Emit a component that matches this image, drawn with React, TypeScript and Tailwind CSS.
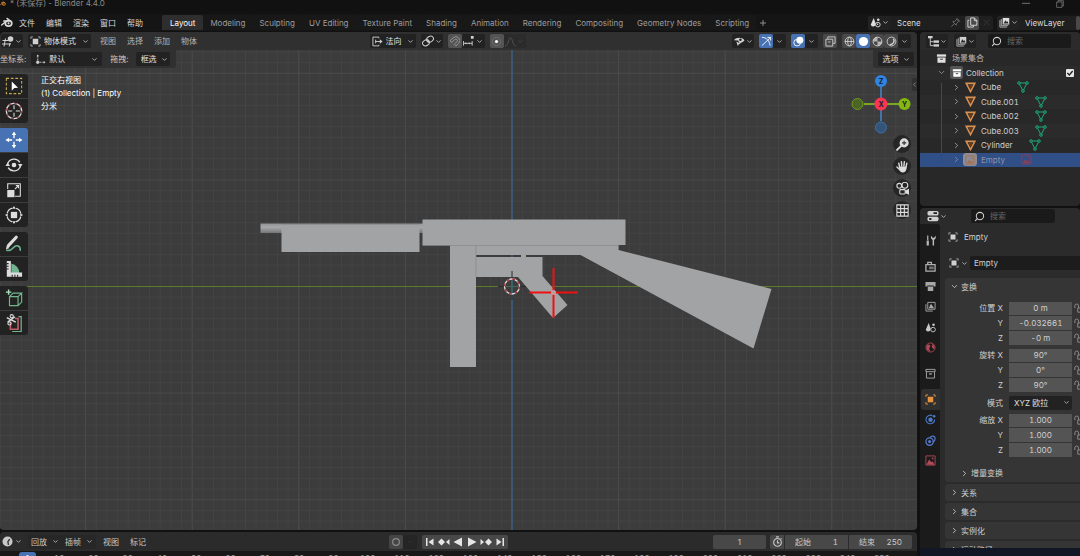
import React from 'react';
import { ChevronDown, ChevronRight, ChevronLeft, Search } from 'lucide-react';

type IconProps = { children: React.ReactNode; className?: string };

const Icon = ({ children, className = 'size-[11px]' }: IconProps) => (
  <svg viewBox="0 0 12 12" fill="none" stroke="currentColor" strokeWidth="1" className={`shrink-0 ${className}`} aria-hidden="true">
    {children}
  </svg>
);

const Down = () => <ChevronDown size={7} strokeWidth={3} className="shrink-0 text-[#b8b8b8]" />;

/* ---------- icons ---------- */

const ObjectIcon = ({ className }: { className?: string }) => (
  <Icon className={className}>
    <path d="M1 3.2V1h2.2M8.8 1H11v2.2M11 8.8V11H8.8M3.2 11H1V8.8" opacity=".8" />
    <rect x="3" y="3" width="6" height="6" fill="currentColor" stroke="none" />
  </Icon>
);

const SceneIcon = ({ className }: { className?: string }) => (
  <Icon className={className}>
    <path d="M4 1.2 6 6.5a2.6 2.6 0 1 1-5.2 2Z" fill="currentColor" stroke="none" />
    <circle cx="9" cy="3" r="1.4" fill="currentColor" stroke="none" />
    <circle cx="8.6" cy="8.3" r="2.5" />
    <circle cx="8.3" cy="8" r=".8" fill="currentColor" stroke="none" />
  </Icon>
);

const LayerIcon = ({ className }: { className?: string }) => (
  <Icon className={className}>
    <path d="M1 3.5V11h7.5M2.5 2.2v7.3h7.5" opacity=".8" />
    <rect x="4" y="1" width="7.2" height="7.2" fill="currentColor" stroke="none" />
    <path d="m5 7 2-3.5 1.4 2L9.4 4.6l1 2.4Z" fill="#282828" stroke="none" />
  </Icon>
);

const BoxIcon = ({ className }: { className?: string }) => (
  <Icon className={className}>
    <rect x="1" y="1.5" width="10" height="2.5" fill="currentColor" stroke="none" />
    <path d="M1.6 5v5.5h8.8V5Z" fill="currentColor" stroke="none" />
    <path d="M4.5 6.8h3" stroke="#2b2b2b" />
  </Icon>
);

const PropertiesIcon = () => (
  <Icon className="size-[12px]">
    <rect x=".5" y="1" width="11" height="4.5" rx="1.6" fill="currentColor" stroke="none" />
    <rect x=".5" y="6.7" width="11" height="4.5" rx="1.6" fill="currentColor" stroke="none" />
    <path d="M6.5 3.2h3.5M2.2 9h2.2" stroke="#222" strokeWidth="1.8" />
  </Icon>
);

const BlenderIcon = ({ className }: { className?: string }) => (
  <svg viewBox="0 0 14 12" className={`shrink-0 ${className}`} fill="none" stroke="currentColor" strokeWidth="1.6" aria-hidden="true">
    <ellipse cx="8.8" cy="7" rx="3.8" ry="3.2" strokeWidth="2" />
    <circle cx="8.8" cy="7" r="1.2" fill="currentColor" stroke="none" />
    <path d="m7 1.2 4.4 3.5M3.2 4.2h5.4M.8 9 5 5.5" strokeLinecap="round" />
  </svg>
);

/* ---------- shared controls ---------- */

type IconButtonProps = { label: string; children: React.ReactNode; className?: string };

const IconButton = ({ label, children, className = '' }: IconButtonProps) => (
  <button aria-label={label} className={`flex h-[14px] items-center justify-center rounded-[2px] ${className}`}>
    {children}
  </button>
);

const IconMenu = ({ label, children }: { label: string; children: React.ReactNode }) => (
  <IconButton label={label} className="w-[22px] gap-px bg-[#222222]">
    {children}
    <Down />
  </IconButton>
);

type PickerProps = { label: string; value: string; className?: string; icon?: React.ReactNode };

const Picker = ({ label, value, className = '', icon }: PickerProps) => (
  <label className={`flex h-[14px] items-center gap-[3px] rounded-[2px] bg-[#222222] ${className}`}>
    {icon}
    <select aria-label={label} className="min-w-0 flex-1 appearance-none bg-transparent text-[#e0e0e0] outline-none">
      <option>{value}</option>
    </select>
    <Down />
  </label>
);

const SearchBox = ({ id, className = '' }: { id: string; className?: string }) => (
  <label htmlFor={id} className={`flex h-[14px] items-center gap-[5px] rounded-[2px] bg-[#1a1a1a] pl-[3px] ${className}`}>
    <Search size={11} strokeWidth={2.2} className="shrink-0 -scale-x-100 text-[#d0d0d0]" />
    <input id={id} type="search" placeholder="搜索" aria-label="搜索" className="w-full min-w-0 bg-transparent outline-none placeholder:text-[#666666]" />
  </label>
);

/* ---------- top bar ---------- */

const menus = ['文件', '编辑', '渲染', '窗口', '帮助'];
const workspaces = ['Layout', 'Modeling', 'Sculpting', 'UV Editing', 'Texture Paint', 'Shading', 'Animation', 'Rendering', 'Compositing', 'Geometry Nodes', 'Scripting'];

const TitleBar = () => (
  <header className="flex h-[14px] shrink-0 items-start bg-[#111111] leading-[7px] text-[#8a8a8a]">
    <BlenderIcon className="mr-1 h-[7px] w-[6px] text-[#e08a2e]" />
    <span>* (未保存) - Blender 4.4.0</span>
    <div className="ml-auto flex gap-[26px] pr-4 text-[#707070]">
      <button aria-label="最小化"><Icon className="size-[8px]"><path d="M0 5h12" strokeWidth="1.5" /></Icon></button>
      <button aria-label="还原"><Icon className="size-[8px]"><path d="M1 3h8v8H1ZM3 3V1h8v8H9" strokeWidth="1.3" /></Icon></button>
    </div>
  </header>
);

const TopBar = () => (
  <nav className="flex h-[17px] shrink-0 items-center bg-[#151515]">
    <BlenderIcon className="mr-[6px] ml-px h-[11px] w-[12px] text-[#d8d8d8]" />
    <div className="mr-[19px] flex gap-[11px] text-[#d8d8d8]">
      {menus.map((menu) => <button key={menu}>{menu}</button>)}
    </div>
    <div className="flex items-center">
      {workspaces.map((name, i) => (
        <button key={name} className={`h-[15px] rounded-t-[2px] whitespace-nowrap ${i === 0 ? 'bg-[#2e2e2e] px-[8px] text-white' : 'bg-[#181818] px-[7px] text-[#9d9d9d]'}`}>
          {name}
        </button>
      ))}
      <IconButton label="添加工作区" className="w-[14px] text-[#9d9d9d]">
        <Icon className="size-[8px]"><path d="M6 1.5v9M1.5 6h9" strokeWidth="1.3" /></Icon>
      </IconButton>
    </div>
    <div className="ml-auto flex gap-1">
      <div className="flex w-[125px] items-center rounded-[2px] bg-[#1f1f1f] text-[#dddddd]">
        <IconMenu label="浏览场景"><SceneIcon /></IconMenu>
        <input aria-label="场景" defaultValue="Scene" className="ml-[7px] w-0 min-w-0 flex-1 bg-transparent outline-none" />
        <IconButton label="固定场景" className="mr-[3px] w-[14px] text-[#707070]">
          <Icon><path d="m1.5 10.5 3-3M6.8 2l3.2 3.2M7.3 2.5 4.8 5 3 5.2 6.8 9 7 7.2l2.5-2.5M7.2 1.2l3.6 3.6" /></Icon>
        </IconButton>
        <IconButton label="新建场景" className="w-[14px] bg-[#494949]">
          <Icon><path d="M2.5 3.5H1v7.5h6V9.5M4 1h4l2.8 2.8V9H4ZM8 1v3h3" /></Icon>
        </IconButton>
        <IconButton label="移除场景" className="w-[14px] text-[#3a3a3a]">
          <Icon className="size-[9px]"><path d="m2 2 8 8M10 2l-8 8" /></Icon>
        </IconButton>
      </div>
      <div className="flex w-[83px] items-center rounded-l-[2px] bg-[#1f1f1f] text-[#dddddd]">
        <IconMenu label="浏览视图层"><LayerIcon /></IconMenu>
        <input aria-label="视图层" defaultValue="ViewLayer" className="ml-[6px] w-0 min-w-0 flex-1 bg-transparent outline-none" />
        <IconButton label="新建视图层" className="w-[4px] bg-[#494949]">{null}</IconButton>
      </div>
    </div>
  </nav>
);

/* ---------- 3D viewport ---------- */

const ViewportHeader = () => (
  <div className="flex h-[18px] shrink-0 items-center rounded-t-[3px] bg-[#303030] pr-[6px] text-[#d0d0d0]">
    <div className="mr-[5px] ml-px">
      <IconMenu label="编辑器类型">
        <Icon className="size-[12px]">
          <path d="M.5 5.5h6M0 9h9M3.5 3.5 2 11.5M8 8l-.8 3.5" />
          <circle cx="8.5" cy="4" r="2.8" fill="currentColor" stroke="none" />
        </Icon>
      </IconMenu>
    </div>
    <Picker label="模式" value="物体模式" icon={<ObjectIcon className="size-[11px]" />} className="w-[63px] px-[2px]" />
    <div className="ml-[9px] flex gap-[11px]">
      {['视图', '选择', '添加', '物体'].map((menu) => <button key={menu} className="text-[#b5b5b5]">{menu}</button>)}
    </div>

    <div className="flex flex-1 items-center justify-center gap-[5px] pr-[34px]">
      <Picker
        label="变换坐标系"
        value="法向"
        className="w-[46px] px-[2px]"
        icon={<Icon><path d="M7.5 2.5V1.2H1v9.6h6.5V9.5M4 6h5.5M4 4v4" /><path d="m8.5 3.5 3 2.5-3 2.5Z" fill="currentColor" stroke="none" /></Icon>}
      />
      <IconMenu label="轴心点">
        <Icon className="size-[12px]"><ellipse cx="4" cy="7.8" rx="3.6" ry="2.8" transform="rotate(-30 4 7.8)" /><ellipse cx="8" cy="4.2" rx="3.6" ry="2.8" transform="rotate(-30 8 4.2)" /><circle cx="6" cy="6" r="1" fill="currentColor" stroke="none" /></Icon>
      </IconMenu>
      <div className="flex">
        <IconButton label="吸附" className="w-[14px] bg-[#545454] text-[#9a9a9a]">
          <Icon><path d="M1.2 5.2 4.5 2a4.2 4.2 0 0 1 6 6l-3 3-1.8-1.8 3-3a1.7 1.7 0 0 0-2.4-2.4L3 7Z" /></Icon>
        </IconButton>
        <IconButton label="吸附至" className="w-[23px] gap-[2px] bg-[#222222]">
          <Icon><path d="M.5 5.5v5M10 5.5v5M.5 8H10M3.2 7v2M6.8 7v2" /><rect x="8.6" y="0" width="3" height="3" fill="currentColor" stroke="none" /></Icon>
          <Down />
        </IconButton>
      </div>
      <div className="flex">
        <IconButton label="衰减编辑" className="w-[14px] bg-[#545454]">
          <Icon><circle cx="6" cy="6" r="4.5" stroke="#6c6c6c" /><circle cx="6" cy="6" r="1.7" fill="#fff" stroke="none" /></Icon>
        </IconButton>
        <IconButton label="衰减类型" className="w-[22px] gap-px bg-[#2b2b2b] text-[#555555]">
          <Icon><path d="M0 11c4 0 3.500-9 6-9s2 9 6 9" /></Icon>
          <ChevronDown size={7} strokeWidth={3} className="text-[#484848]" />
        </IconButton>
      </div>
    </div>

    <div className="flex items-center gap-[5px]">
      <IconMenu label="可选性与可见性">
        <Icon><path d="M0 4.500C2.500 1 8.500 1 11.500 4.500 9.500 7 7 7.500 6 7.500L4.500 5Z" fill="currentColor" stroke="none" /><circle cx="7" cy="4" r="1.4" fill="#222" stroke="none" /><path d="m2.500 6 5 2.500-2.200.6L4.200 11Z" fill="currentColor" stroke="none" /></Icon>
      </IconMenu>
      <div className="flex">
        <IconButton label="显示 Gizmo" className="w-[14px] bg-[#4772b3] text-white">
          <Icon><path d="M1 1.500c5 0 8 3.500 9 9M1 10.500 10 2M7 1.500h3.500V5" /></Icon>
        </IconButton>
        <IconButton label="Gizmo 选项" className="w-[13px] bg-[#222222]"><Down /></IconButton>
      </div>
      <div className="flex">
        <IconButton label="显示叠加层" className="w-[14px] bg-[#4772b3] text-white">
          <Icon><circle cx="4.500" cy="7.300" r="3.600" /><circle cx="7.500" cy="4.500" r="3.800" fill="currentColor" stroke="none" /></Icon>
        </IconButton>
        <IconButton label="叠加层选项" className="w-[13px] bg-[#222222]"><Down /></IconButton>
      </div>
      <IconButton label="透视模式" className="w-[14px] bg-[#484848]">
        <Icon><path d="M3 3V1h8v7H9M1 3.500h7.500V11H1ZM3.500 6.500h2.500" /></Icon>
      </IconButton>
      <div className="flex">
        <IconButton label="线框" className="w-[14px] bg-[#484848]">
          <Icon><circle cx="6" cy="6" r="4.800" /><ellipse cx="6" cy="6" rx="2" ry="4.800" /><path d="M1 6h10" /></Icon>
        </IconButton>
        <IconButton label="实体" className="w-[14px] bg-[#4772b3] text-white">
          <Icon><circle cx="6" cy="6" r="5" fill="currentColor" stroke="none" /></Icon>
        </IconButton>
        <IconButton label="材质预览" className="w-[14px] bg-[#484848]">
          <Icon><circle cx="6" cy="6" r="4.800" /><path d="M6 1a5 5 0 0 0-5 5h5v5a5 5 0 0 0 5-5H6Z" fill="currentColor" stroke="none" opacity=".8" /></Icon>
        </IconButton>
        <IconButton label="渲染" className="w-[14px] bg-[#484848]">
          <Icon><circle cx="6" cy="6" r="4.800" /><path d="M8 3c2 3 0 6-4 6.500" strokeWidth="1.500" /></Icon>
        </IconButton>
        <IconButton label="着色选项" className="w-[13px] bg-[#222222]"><Down /></IconButton>
      </div>
    </div>
  </div>
);

// grid lines sit every 10.66 units around the world origin
const STEP = 10.66;
const ORIGIN = { x: 512, y: 286.5 };
const columns = Array.from({ length: 89 }, (_, i) => i - 49);
const rows = Array.from({ length: 47 }, (_, i) => i - 23);

const Scene = () => (
  <svg viewBox="0 50 917 480" preserveAspectRatio="xMidYMid slice" className="absolute inset-0 size-full bg-[#3c3c3c]" aria-hidden="true">
    <defs>
      <linearGradient id="barrel" x1="0" y1="0" x2="0" y2="1">
        <stop offset="0" stopColor="#909294" />
        <stop offset=".4" stopColor="#a6a8aa" />
        <stop offset="1" stopColor="#747576" />
      </linearGradient>
    </defs>
    {columns.map((n) => (
      <path key={n} d={`M${ORIGIN.x + n * STEP} 50V530`} stroke={n % 10 === 0 ? '#4d4d4d' : '#444444'} />
    ))}
    {rows.map((n) => (
      <path key={n} d={`M0 ${ORIGIN.y + n * STEP}H917`} stroke={n % 10 === 0 ? '#4b4b4b' : '#444444'} />
    ))}
    <path d="M0 286.500H917" stroke="#5c7a2c" />
    <path d="M512 50V530" stroke="#376590" strokeWidth="1.200" />

    <g fill="#a2a3a5">
      <rect x="260.500" y="223.500" width="163" height="9.500" fill="url(#barrel)" />
      <rect x="281.500" y="224" width="138" height="28" />
      <path d="M475 244H618.500V250L771.500 289 753.500 348.500 580.500 255H526V257H542.500V276L567.500 305 553 318 518 277H475V257H521V255H475Z" />
      <rect x="450" y="244" width="26" height="123" />
      <rect x="422.500" y="219.500" width="203" height="25.500" />
    </g>
    <path d="M422.500 245.500H618.500M476 245V277M281.500 224.500H419" stroke="#8a8b8d" strokeWidth=".8" fill="none" />

    <path d="M512 271v9M512 293v7M498 286.500h8M518 286.500h8" stroke="#2b2b2b" />
    <path d="M512 281v11M506.500 286.500h11" stroke="#3c6a5c" />
    <circle cx="512" cy="286.500" r="7.500" fill="none" stroke="#dddddd" strokeWidth="1.300" />
    <circle cx="512" cy="286.500" r="7.500" fill="none" stroke="#a8343e" strokeWidth="1.400" strokeDasharray="2.950 2.940" />
    <path d="M529 292.500H578M553.500 268V318" stroke="#f01010" strokeWidth="2" />
    <circle cx="553.500" cy="292.500" r="2" fill="#a2a3a5" stroke="#f0a0a0" strokeWidth=".8" />
  </svg>
);

type Tool = { name: string; active?: boolean; draw: React.ReactNode };

const toolGroups: Tool[][] = [
  [
    { name: '框选', draw: <><rect x="1.500" y="1.500" width="17" height="17" stroke="#c8a850" strokeDasharray="3 2" /><path d="m7.500 5 7 7-4.200.2-2.800 3Z" fill="#fff" stroke="none" /></> },
    { name: '游标', draw: <><circle cx="10" cy="10" r="8.500" stroke="#ddd" strokeWidth="1.500" /><circle cx="10" cy="10" r="8.500" stroke="#9c4a50" strokeWidth="1.500" strokeDasharray="3.300 3.380" /><path d="M10 3.500v4.500M10 12v4.500M3.500 10H8M12 10h4.500" /></> },
  ],
  [
    { name: '移动', active: true, draw: <><path d="M10 4v4M10 12v4M4 10h4M12 10h4" strokeWidth="1.500" /><path d="m10 .5 2.500 4h-5ZM10 19.500l2.500-4h-5ZM.5 10l4-2.500v5ZM19.500 10l-4-2.500v5Z" fill="currentColor" stroke="none" /></> },
    { name: '旋转', draw: <><path d="M3 8.500A7.500 7.500 0 0 1 16.500 7M17 11.500A7.500 7.500 0 0 1 3.500 13" strokeWidth="1.500" /><path d="M14.500 9h5l-2.500 4ZM5.500 11h-5L3 7Z" fill="currentColor" stroke="none" /><circle cx="10" cy="10" r="2.600" fill="currentColor" stroke="none" /></> },
    { name: '缩放', draw: <><path d="M3 9V3h14v14h-6" /><rect x="2.500" y="10" width="8" height="8" fill="currentColor" stroke="none" /><path d="m11 9 4-4M12 5h3v3" /></> },
    { name: '变换', draw: <><circle cx="10" cy="10" r="7.800" strokeWidth="1.400" strokeDasharray="8.250 4" strokeDashoffset="-2" /><path d="M10 0 12 3H8ZM10 20l2-3H8ZM0 10l3-2v4ZM20 10l-3-2v4Z" fill="currentColor" stroke="none" /><rect x="6.500" y="6.500" width="7" height="7" fill="currentColor" stroke="none" /></> },
  ],
  [
    { name: '标注', draw: <><path d="M4 11.500 12.500 2.500" strokeWidth="3.500" strokeLinecap="round" /><path d="m1 16 1-4.500 3 3Z" fill="currentColor" stroke="none" /><path d="M2 17c6 2 7-5 11-5 3 0 4 2 4 5" stroke="#6fb58f" strokeWidth="1.800" strokeLinecap="round" /></> },
    { name: '测量', draw: <><path d="M7 4a11 11 0 0 1 9 11H7Z" fill="#6fb58f" stroke="none" /><path d="M2 1h4.500v13H19v4.500H2Z" fill="currentColor" stroke="none" /><path d="M2 4h2M2 7h2M2 10h2M8 18.500v-2M11 18.500v-2M14 18.500v-2" stroke="#222" /></> },
  ],
  [
    { name: '添加立方体', draw: <><path d="M5 8.500h9.500v10H5ZM5 8.500l4-4h9.500l-4 4M18.500 4.500v10l-4 4" stroke="#6fb58f" strokeWidth="1.300" /><path d="M4 .5v6M1 3.500h6" stroke="#a8e0c0" strokeWidth="1.600" /></> },
    { name: '刺切', draw: <><path d="M6 9v8h8.500V5H11" stroke="#bf5e66" strokeWidth="1.800" /><path d="M8 19.500h10V8M15 3h3v5" stroke="#6fb58f" strokeWidth="1.400" /><path d="m2 4 10 5M3 9 11 3" strokeWidth="1.500" /><circle cx="5" cy="10.500" r="1.800" /><circle cx="7.500" cy="2.500" r="1.800" /></> },
  ],
];

const Toolbar = () => (
  <div className="flex w-[28px] flex-col gap-[5px]" role="toolbar">
    {toolGroups.map((group, i) => (
      <div key={i} className="flex flex-col gap-px overflow-hidden rounded-r-[3px]">
        {group.map((tool) => (
          <button key={tool.name} aria-label={tool.name} className={`flex h-[24px] items-center justify-center ${tool.active ? 'bg-[#4772b3] text-white' : 'bg-[#222222] text-[#dddddd]'}`}>
            <svg viewBox="0 0 20 20" className="size-[18px]" fill="none" stroke="currentColor" strokeWidth="1.200">{tool.draw}</svg>
          </button>
        ))}
      </div>
    ))}
  </div>
);

const Gizmo = () => (
  <svg viewBox="0 0 60 60" className="size-[60px]" aria-label="视图方向">
    <path d="M30 30V7" stroke="#4a86c8" strokeWidth="1.500" />
    <path d="M30 30v17" stroke="#4a86c8" strokeWidth="1.500" />
    <path d="M13 30h40" stroke="#7ba525" strokeWidth="2" />
    <circle cx="30" cy="7" r="6" fill="#2f83e3" />
    <circle cx="30" cy="53.500" r="5.500" fill="#345478" stroke="#3d70a8" />
    <circle cx="6.500" cy="30" r="5.500" fill="#4c6425" stroke="#6f9a1f" />
    <circle cx="53.500" cy="30" r="6" fill="#84b80f" />
    <circle cx="30" cy="30" r="6.500" fill="#fb3552" />
    <g fontSize="7" fontWeight="700" textAnchor="middle" fill="#17202a">
      <text x="30" y="9.500">Z</text>
      <text x="53.500" y="32.500">Y</text>
      <text x="30" y="32.500">X</text>
    </g>
  </svg>
);

const NavButton = ({ label, children }: { label: string; children: React.ReactNode }) => (
  <button aria-label={label} className="flex size-[18px] items-center justify-center rounded-full bg-[#262626]">{children}</button>
);

const Viewport = () => (
  <section className="flex min-h-0 flex-1 flex-col overflow-hidden rounded-[4px]">
    <ViewportHeader />
    <div className="relative min-h-0 flex-1">
      <Scene />
      <div className="relative flex h-full flex-col">
        <div className="flex h-[18px] shrink-0 justify-between text-[#c8c8c8]">
          <div className="flex items-start gap-[8px] rounded-br-[3px] bg-[#303030] pt-[2px] pr-[6px] leading-[14px]">
            <div className="flex gap-[5px]">
              <span>坐标系:</span>
              <Picker
                label="坐标系"
                value="默认"
                className="w-[71px] px-[4px]"
                icon={<Icon><path d="M3 2v7h7" strokeDasharray="2 1" /><circle cx="3" cy="9" r="1.800" fill="currentColor" stroke="none" /><path d="m1.500 2.500 1.500-2 1.500 2ZM9.500 7.500l2 1.500-2 1.500Z" fill="currentColor" stroke="none" /></Icon>}
              />
            </div>
            <div className="flex gap-[7px]">
              <span>拖拽:</span>
              <Picker label="拖拽" value="框选" className="w-[34px] pr-[2px] pl-[5px]" />
            </div>
          </div>
          <div className="rounded-bl-[3px] bg-[#303030] pt-[2px] pr-[3px] pl-[5px]">
            <button className="flex h-[14px] w-[36px] items-center justify-center gap-[4px] rounded-[2px] bg-[#222222] text-[#e0e0e0]">选项<Down /></button>
          </div>
        </div>
        <div className="flex pt-[6px]">
          <Toolbar />
          <p className="ml-[13px] leading-[13px] text-white">
            正交右视图<br />
            (1) Collection | Empty<br />
            分米
          </p>
          <div className="ml-auto flex flex-col items-end gap-px pr-[6px]">
            <Gizmo />
            <div className="flex flex-col gap-[4px] text-[#dddddd]">
              <NavButton label="缩放视图">
                <Icon className="size-[13px]"><circle cx="7.500" cy="4.500" r="4.200" fill="currentColor" stroke="none" /><path d="M7.500 2.500v4M5.500 4.500h4" stroke="#333" /><path d="M4.500 7.500 1 11" strokeWidth="1.800" strokeLinecap="round" /></Icon>
              </NavButton>
              <NavButton label="移动视图">
                <Icon className="size-[13px]"><path d="M3.300 6.500 2.600 3M5.300 5.500 5 1.500M7.300 5.500l.4-4M9.200 6.300l.8-3.300M3.500 9 .9 6.500" strokeWidth="1.300" strokeLinecap="round" /><path d="M2.700 6h7.200c0 2.500-.8 5.500-3.600 5.500S3 9 2.700 6Z" fill="currentColor" stroke="none" /></Icon>
              </NavButton>
              <NavButton label="摄像机视图">
                <Icon className="size-[13px]"><circle cx="3" cy="3.500" r="2.200" /><circle cx="8.200" cy="3" r="2.700" /><rect x="3.500" y="7" width="5" height="4" rx=".8" /><path d="m8.500 8.500 3-1.500v4l-3-1.300" fill="currentColor" /></Icon>
              </NavButton>
              <NavButton label="切换透视/正交"><Icon className="size-[13px]"><path d="M.8.8h10.400v10.400H.8ZM.8 4.300h10.400M.8 7.700h10.400M4.300.8v10.400M7.700.8v10.400" /></Icon></NavButton>
            </div>
          </div>
        </div>
      </div>
      <button aria-label="展开侧栏" className="absolute top-[28px] right-0 flex h-[13px] w-[5px] items-center justify-center rounded-l-[2px] bg-[#303030]">
        <ChevronLeft size={7} strokeWidth={2.500} className="shrink-0 text-[#999999]" />
      </button>
    </div>
  </section>
);

/* ---------- timeline ---------- */

const playback = [
  { name: '跳转至首帧', d: 'M2 2h1.500v8H2ZM9.500 2.500v7L4.500 6Z' },
  { name: '上一关键帧', d: 'M0 6l3.500-3.500L7 6 3.500 9.500ZM11.500 3v6L8 6Z' },
  { name: '倒放', d: 'M10 1.500v9L1.500 6Z' },
  { name: '播放', d: 'M2 1.500v9L10.500 6Z' },
  { name: '下一关键帧', d: 'M12 6 8.500 2.500 5 6l3.500 3.500ZM.5 3v6L4 6Z' },
  { name: '跳转至末帧', d: 'M10 2H8.500v8H10ZM2.500 2.500v7l5-3.500Z' },
];
const ticks = Array.from({ length: 25 }, (_, i) => (i + 1) * 10);

const Timeline = () => (
  <section className="mt-[2px] flex h-[24px] shrink-0 flex-col overflow-hidden rounded-t-[4px] bg-[#181818]">
    <div className="flex h-[19px] shrink-0 items-center bg-[#2b2b2b] pr-[5px] text-[#c8c8c8]">
      <IconButton label="编辑器类型" className="ml-px w-[22px] gap-[2px]">
        <Icon className="size-[11px]"><circle cx="6" cy="6" r="5.500" fill="currentColor" stroke="none" /><path d="M6.500 2.500V6L9 8.500" stroke="#222" strokeWidth="1.300" transform="rotate(35 6 6)" /></Icon>
        <Down />
      </IconButton>
      <div className="ml-[5px] flex bg-[#272727]">
        {['回放', '插帧'].map((name) => (
          <button key={name} className="flex h-[14px] w-[34px] items-center justify-center gap-[5px]">{name}<Down /></button>
        ))}
      </div>
      <div className="ml-[7px] flex gap-[11px]"><button>视图</button><button>标记</button></div>
      <div className="flex flex-1 items-center justify-center pl-[38px]">
        <IconButton label="自动插帧" className="w-[14px] bg-[#454545] text-[#8c8c8c]"><Icon className="size-[10px]"><circle cx="6" cy="6" r="4" strokeWidth="1.400" /></Icon></IconButton>
        <IconButton label="自动插帧选项" className="mr-[5px] w-[14px] bg-[#252525]"><ChevronDown size={6} className="text-[#444444]" /></IconButton>
        <div className="flex overflow-hidden rounded-[2px] bg-[#484848] px-px text-[#e6e6e6]">
          {playback.map((item) => (
            <button key={item.name} aria-label={item.name} className="flex h-[14px] w-[14px] items-center justify-center">
              <Icon className="size-[12px]"><path d={item.d} fill="currentColor" stroke="none" /></Icon>
            </button>
          ))}
        </div>
      </div>
      <input aria-label="当前帧" defaultValue="1" className="h-[14px] w-[53px] rounded-[2px] bg-[#484848] text-center outline-none" />
      <div className="ml-[4px] flex gap-px overflow-hidden rounded-[2px]">
        <IconButton label="使用预览范围" className="w-[14px] rounded-none bg-[#484848]">
          <Icon><circle cx="6" cy="7" r="4.200" strokeWidth="1.200" /><path d="M6 4.500V7.500H8M4.500 1h3M9.500 2.500l1 1" strokeWidth="1.200" /></Icon>
        </IconButton>
        {[{ name: '起始', value: '1' }, { name: '结束', value: '250' }].map((field) => (
          <label key={field.name} className="flex h-[14px] w-[63px] items-center bg-[#484848] px-[10px]">
            <span className="shrink-0">{field.name}</span>
            <input defaultValue={field.value} className="w-full min-w-0 bg-transparent text-right tabular-nums outline-none" />
          </label>
        ))}
      </div>
    </div>
    <div className="relative grid grid-cols-[repeat(25,1fr)] pr-[18px] pl-[42px] text-center leading-[14px] text-[#999999] tabular-nums">
      {ticks.map((tick) => <span key={tick}>{tick}</span>)}
      <span className="absolute top-px left-[19px] h-[14px] w-[17px] rounded-[3px] bg-[#4772b3] leading-[12px] text-white">1</span>
    </div>
  </section>
);

/* ---------- outliner ---------- */

const objects = ['Cube', 'Cube.001', 'Cube.002', 'Cube.003', 'Cylinder'];

const PictureIcon = ({ className }: { className?: string }) => (
  <Icon className={className}><path d="M1 1h10v10H1Z" /><path d="m2 10 2.800-4.500 2 2.500 1.200-1.500L10 10Z" fill="currentColor" stroke="none" /><circle cx="8.300" cy="3.700" r="1" fill="currentColor" stroke="none" /></Icon>
);

const Outliner = () => (
  <section className="h-[174px] shrink-0 overflow-hidden rounded-[4px] bg-[#282828] text-[#d0d0d0]">
    <div className="flex h-[18px] items-center gap-[6px] bg-[#2b2b2b] pr-[9px] pl-[6px]">
      <IconMenu label="编辑器类型">
        <Icon><path d="M2.500 2v8.500H6M2.500 6.200H6" /><rect x="0" y="0" width="5" height="2.500" fill="currentColor" stroke="none" /><rect x="6" y="4.800" width="6" height="2.600" fill="currentColor" stroke="none" /><rect x="6" y="9" width="6" height="2.600" fill="currentColor" stroke="none" /></Icon>
      </IconMenu>
      <IconMenu label="显示模式"><LayerIcon /></IconMenu>
      <SearchBox id="outliner-search" className="ml-[6px] flex-1" />
    </div>
    <div className="relative mt-px grid h-[116px] auto-rows-fr">
      <div className="flex items-center gap-[5px] pl-[16px] text-[#b8b8b8]">
        <BoxIcon className="size-[11px] text-[#e0e0e0]" />场景集合
      </div>
      <div className="flex items-center bg-[#2b2b2b] pr-[6px] pl-[17px]">
        <ChevronDown size={9} strokeWidth={2.200} className="text-[#999999]" />
        <span className="mr-[3px] ml-[4px] flex h-[13px] w-[13px] items-center justify-center rounded-[2px] bg-[#555555]"><BoxIcon className="size-[10px] text-white" /></span>
        <label htmlFor="collection-visible">Collection</label>
        <span className="relative ml-auto flex">
          <input id="collection-visible" type="checkbox" defaultChecked className="size-[8px] appearance-none rounded-[1px] bg-[#e6e6e6]" />
          <Icon className="pointer-events-none absolute inset-0 size-[8px] text-[#222222]"><path d="m2 6 3 3 5-6" strokeWidth="2" /></Icon>
        </span>
      </div>
      {objects.map((name, i) => (
        <div key={name} className={`flex items-center pl-[32px] ${i % 2 ? 'bg-[#2b2b2b]' : ''}`}>
          <ChevronRight size={9} strokeWidth={2.200} className="text-[#aaaaaa]" />
          <Icon className="mr-[5px] ml-[4px] size-[11px] text-[#d98f4e]"><path d="M1.300 1.500h9.400L6 10.500Z" strokeWidth="1.700" /><path d="M3.800 3.200h4.400L6 7.500Z" fill="#6a3c1a" stroke="none" /></Icon>
          <span className="tabular-nums">{name}</span>
          <Icon className="ml-[16px] size-[12px] text-[#1fa87c]"><path d="M2 2h8L6 10Z" /><g fill="#1a3a30"><circle cx="2" cy="2" r="1.300" /><circle cx="10" cy="2" r="1.300" /><circle cx="6" cy="10" r="1.300" /></g></Icon>
        </div>
      ))}
      <div className="flex items-center bg-[#304f87] pl-[32px] text-[#8b93a8]">
        <ChevronRight size={9} strokeWidth={2.200} />
        <span className="mr-[4px] ml-[2px] flex h-[13px] w-[14px] items-center justify-center rounded-[3px] bg-[#8d8b93]"><PictureIcon className="size-[10px] text-[#a86f4c]" /></span>
        <span>Empty</span>
        <PictureIcon className="ml-[16px] size-[11px] text-[#85405c]" />
      </div>
      <span className="absolute top-[32px] bottom-[4px] left-[21px] w-px bg-[#484848]" />
    </div>
  </section>
);

/* ---------- properties ---------- */

const tabGroups = [
  {
    height: 'h-[21px]',
    tabs: [{ name: '工具', color: 'text-[#bbbbbb]', draw: <><path d="M3 .5v5" strokeWidth="1.300" /><path d="M1.800 6h2.400v5.500H1.800ZM6.500.5v3L8.300 5.500v6h1.600v-6l1.800-2v-3L10 3H8.300Z" fill="currentColor" stroke="none" /></> }],
  },
  {
    height: 'h-[102px]',
    tabs: [
      { name: '渲染', color: 'text-[#b0b0b0]', draw: <><path d="M1 4h10v7H1ZM3 4V1.500h4V4" strokeWidth="1.400" /><rect x="4.500" y="6" width="5" height="3" fill="currentColor" stroke="none" opacity=".6" /></> },
      { name: '输出', color: 'text-[#a8a8a8]', draw: <path d="M.5 1h11v5h-2V5h-7v1h-2ZM3 6h6v5H3Z" fill="currentColor" stroke="none" /> },
      { name: '视图层', color: 'text-[#a8a8a8]', draw: <><path d="M1 3.500V11h7.500M3 1.500h8V9H3Z" /><path d="m4 8 2.500-5L10 8Z" fill="currentColor" stroke="none" /></> },
      { name: '场景', color: 'text-[#c8c8c8]', draw: <><path d="M4 1.200 6 6.500a2.600 2.600 0 1 1-5.200 2Z" fill="currentColor" stroke="none" /><circle cx="9.300" cy="3" r="1.400" fill="currentColor" stroke="none" /><circle cx="8.800" cy="8.300" r="2.500" /></> },
      { name: '世界环境', color: 'text-[#b04a56]', draw: <><circle cx="6" cy="6" r="5" /><path d="M1.500 4 4 2.500l2 1.500-1.500 3L6 10.500 2 8.500ZM8 2l2.500 2.500L10 8 7.500 6Z" fill="currentColor" stroke="none" /></> },
    ],
  },
  {
    height: 'h-[21px]',
    tabs: [{ name: '集合', color: 'text-[#a8a8a8]', draw: <><path d="M1 1.500h10V4H1ZM1.600 4v7h8.800V4" /><path d="M4.500 6.500h3" strokeWidth="1.400" /></> }],
  },
  {
    height: 'h-[82px]',
    tabs: [
      { name: '物体', color: 'text-[#e8943f]', draw: <><path d="M1 3.200V1h2.200M8.800 1H11v2.200M11 8.800V11H8.800M3.200 11H1V8.800" /><rect x="3" y="3" width="6" height="6" fill="currentColor" stroke="none" /></> },
      { name: '物理', color: 'text-[#4a7ac8]', draw: <><path d="M8 1.800A4.700 4.700 0 1 0 10.500 6" strokeWidth="1.200" /><circle cx="6" cy="6.300" r="2.400" fill="currentColor" stroke="none" /><circle cx="10" cy="2.500" r="1.400" fill="currentColor" stroke="none" /></> },
      { name: '约束', color: 'text-[#5578c8]', draw: <><circle cx="5" cy="7.200" r="4" strokeWidth="1.400" /><circle cx="5" cy="7.200" r="1.700" fill="currentColor" stroke="none" /><path d="M5 3C7 .5 11 .5 11 4c0 2-1 3-2.500 4" strokeWidth="1.300" /></> },
      { name: '数据', color: 'text-[#b04a56]', draw: <><path d="M1 1h10v10H1Z" /><path d="m1.500 10.500 3-5.500 2.500 3 1.200-1.200 2.300 3.700Z" fill="currentColor" stroke="none" /><circle cx="8.300" cy="3.700" r="1" fill="currentColor" stroke="none" /></> },
    ],
  },
];

const vectors = [
  { name: '位置', values: ['0 m', '-0.032661', '-0 m'] },
  { name: '旋转', values: ['90°', '0°', '90°'] },
  { name: '缩放', values: ['1.000', '1.000', '1.000'] },
];

const VectorField = ({ name, values }: { name: string; values: string[] }) => (
  <div className="grid h-[43px] auto-rows-fr gap-px">
    {['X', 'Y', 'Z'].map((axis, i) => (
      <div key={axis} className="flex items-stretch">
        <label htmlFor={`${name}-${axis}`} className="flex w-[58px] items-center justify-end whitespace-pre">
          {i === 0 ? `${name} ${axis}` : axis}
        </label>
        <input id={`${name}-${axis}`} defaultValue={values[i]} className="ml-[6px] w-[63px] bg-[#545454] text-center tabular-nums outline-none" />
        <button aria-label={`锁定 ${name} ${axis}`} className="ml-[2px] flex items-center text-[#8a8a8a]">
          <Icon className="size-[10px]"><path d="M1 6V3.500a2.200 2.200 0 0 1 4.500 0V6M4.500 6h6v5h-6Z" strokeWidth="1.200" /></Icon>
        </button>
      </div>
    ))}
  </div>
);

const Properties = () => (
  <section className="mt-[2px] flex min-h-0 flex-1 flex-col overflow-hidden rounded-t-[4px] bg-[#2b2b2b] text-[#d0d0d0]">
    <div className="flex h-[16px] shrink-0 items-center pr-[25px] pl-[6px]">
      <IconButton label="编辑器类型" className="w-[22px] gap-px"><PropertiesIcon /><Down /></IconButton>
      <SearchBox id="properties-search" className="ml-[23px] flex-1" />
    </div>
    <div className="flex min-h-0 flex-1">
      <div className="flex w-[20px] shrink-0 flex-col gap-[5px] rounded-tr-[3px] bg-[#1b1b1b] pt-[6px]">
        {tabGroups.map((group, i) => (
          <div key={i} className={`grid auto-rows-fr ${group.height}`}>
            {group.tabs.map((tab) => (
              <button key={tab.name} aria-label={tab.name} className={`ml-px flex items-center justify-center rounded-l-[3px] ${tab.color} ${tab.name === '物体' ? 'bg-[#303030]' : ''}`}>
                <Icon className="size-[11px]">{tab.draw}</Icon>
              </button>
            ))}
          </div>
        ))}
      </div>
      <div className="flex min-w-0 flex-1 flex-col pl-[5px]">
        <div className="mt-[6px] flex h-[14px] shrink-0 items-center gap-[6px] pl-[3px]"><ObjectIcon className="size-[10px]" />Empty</div>
        <div className="mt-[12px] flex h-[14px] shrink-0 items-center pl-[4px]">
          <ObjectIcon className="mr-[2px] size-[10px]" />
          <Down />
          <input aria-label="名称" defaultValue="Empty" className="ml-[2px] h-full min-w-0 flex-1 rounded-l-[2px] bg-[#1c1c1c] pl-[4px] outline-none" />
        </div>
        <div className="mt-[8px] flex h-[204px] shrink-0 flex-col rounded-l-[3px] bg-[#353535]">
          <button className="flex h-[18px] items-center gap-[2px] pl-[5px]"><ChevronDown size={9} strokeWidth={2.200} />变换</button>
          <div className="mt-[6px] flex flex-col gap-[4px]">
            <VectorField {...vectors[0]} />
            <VectorField {...vectors[1]} />
            <div className="flex h-[14px] items-center">
              <span className="w-[58px] text-right">模式</span>
              <Picker label="旋转模式" value="XYZ 欧拉" className="ml-[6px] w-[63px] pr-[2px] pl-[5px]" />
            </div>
            <VectorField {...vectors[2]} />
          </div>
          <button className="mt-[8px] flex h-[18px] items-center gap-[2px] pl-[15px]"><ChevronRight size={9} strokeWidth={2.200} />增量变换</button>
        </div>
        {['关系', '集合', '实例化', '运动路径'].map((panel) => (
          <button key={panel} className="mt-[2px] flex h-[17px] shrink-0 items-center gap-[2px] rounded-l-[3px] bg-[#353535] pl-[5px]">
            <ChevronRight size={9} strokeWidth={2.200} />{panel}
          </button>
        ))}
      </div>
    </div>
  </section>
);

const App: React.FC = () => {
  return (
    <div className="flex h-screen flex-col overflow-hidden bg-[#111111] font-['Inter','Noto_Sans_CJK_SC',sans-serif] text-[8px] leading-[12px]">
      <TitleBar />
      <TopBar />
      <main className="flex min-h-0 flex-1 gap-[3px] pt-px">
        <div className="flex min-w-0 flex-1 flex-col">
          <Viewport />
          <Timeline />
        </div>
        <aside className="flex w-[160px] shrink-0 flex-col overflow-hidden">
          <Outliner />
          <Properties />
          <div className="h-[8px] shrink-0 bg-[#121725]" />
        </aside>
      </main>
    </div>
  );
};

export default App;
